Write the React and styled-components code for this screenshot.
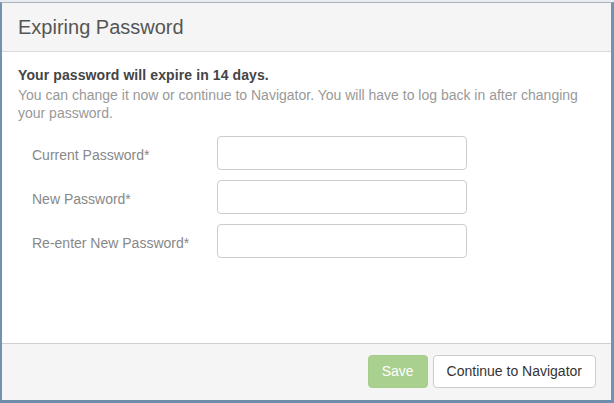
import React from "react";
import styled, { createGlobalStyle } from "styled-components";

const Global = createGlobalStyle`
  html, body { margin: 0; padding: 0; background: #ffffff; }
  body { font-family: "Liberation Sans", Arial, sans-serif; }
  * { box-sizing: border-box; }
`;

const Screen = styled.div`
  width: 614px;
  height: 403px;
  display: flex;
  flex-direction: column;
  background: #e9edf1;
  padding-top: 2px;
`;

const Dialog = styled.div`
  flex: 1;
  display: flex;
  flex-direction: column;
  border-top: 1px solid #a9b3bd;
  border-left: 2px solid #7391b0;
  border-right: 3px solid #7391b0;
  border-bottom: 3px solid #6f8cab;
  background: #fff;
`;

const Header = styled.div`
  height: 49px;
  display: flex;
  align-items: center;
  padding: 0 16px;
  background: #f5f5f5;
  border-bottom: 1px solid #d9d9d9;
`;

const Title = styled.h4`
  margin: 0;
  font-size: 20px;
  font-weight: normal;
  color: #555;
  line-height: 22px;
`;

const Body = styled.div`
  flex: 1;
  padding: 13px 16px 0 16px;
  display: flex;
  flex-direction: column;
`;

const Lead = styled.p`
  margin: 0;
  font-size: 14px;
  font-weight: bold;
  color: #444;
  line-height: 20px;
  letter-spacing: 0.1px;
`;

const Note = styled.p`
  margin: 1px 0 0 0;
  font-size: 14px;
  color: #999;
  line-height: 18px;
`;

const Form = styled.div`
  margin-top: 14px;
  display: flex;
  flex-direction: column;
  gap: 10px;
  padding-left: 14px;
`;

const Row = styled.div`
  display: flex;
  align-items: center;
`;

const Label = styled.label`
  width: 185px;
  font-size: 14px;
  color: #888;
  padding-top: 3px;
`;

const Input = styled.input`
  width: 250px;
  height: 34px;
  border: 1px solid #cccccc;
  border-radius: 4px;
  background: #fff;
  padding: 6px 12px;
  font-size: 14px;
  font-family: inherit;
  outline: none;
`;

const Footer = styled.div`
  height: 57px;
  background: #f5f5f5;
  border-top: 1px solid #cfcfcf;
  display: flex;
  align-items: center;
  justify-content: flex-end;
  gap: 5px;
  padding: 0 15px 2px 0;
`;

const Button = styled.button`
  height: 33px;
  padding: 0 13px;
  font-size: 14px;
  font-family: inherit;
  border-radius: 4px;
  border: 1px solid ${(p) => (p.$primary ? "#a4cd8a" : "#cccccc")};
  background: ${(p) => (p.$primary ? "#a9d08f" : "#ffffff")};
  color: ${(p) => (p.$primary ? "#ffffff" : "#333333")};
  cursor: ${(p) => (p.$primary ? "not-allowed" : "pointer")};
`;

const fields = ["Current Password*", "New Password*", "Re-enter New Password*"];

export default function App() {
  return (
    <>
      <Global />
      <Screen>
        <Dialog>
          <Header>
            <Title>Expiring Password</Title>
          </Header>
          <Body>
            <Lead>Your password will expire in 14 days.</Lead>
            <Note>
              You can change it now or continue to Navigator. You will have to log back in after changing your password.
            </Note>
            <Form>
              {fields.map((f) => (
                <Row key={f}>
                  <Label>{f}</Label>
                  <Input type="password" />
                </Row>
              ))}
            </Form>
          </Body>
          <Footer>
            <Button $primary disabled>Save</Button>
            <Button>Continue to Navigator</Button>
          </Footer>
        </Dialog>
      </Screen>
    </>
  );
}
